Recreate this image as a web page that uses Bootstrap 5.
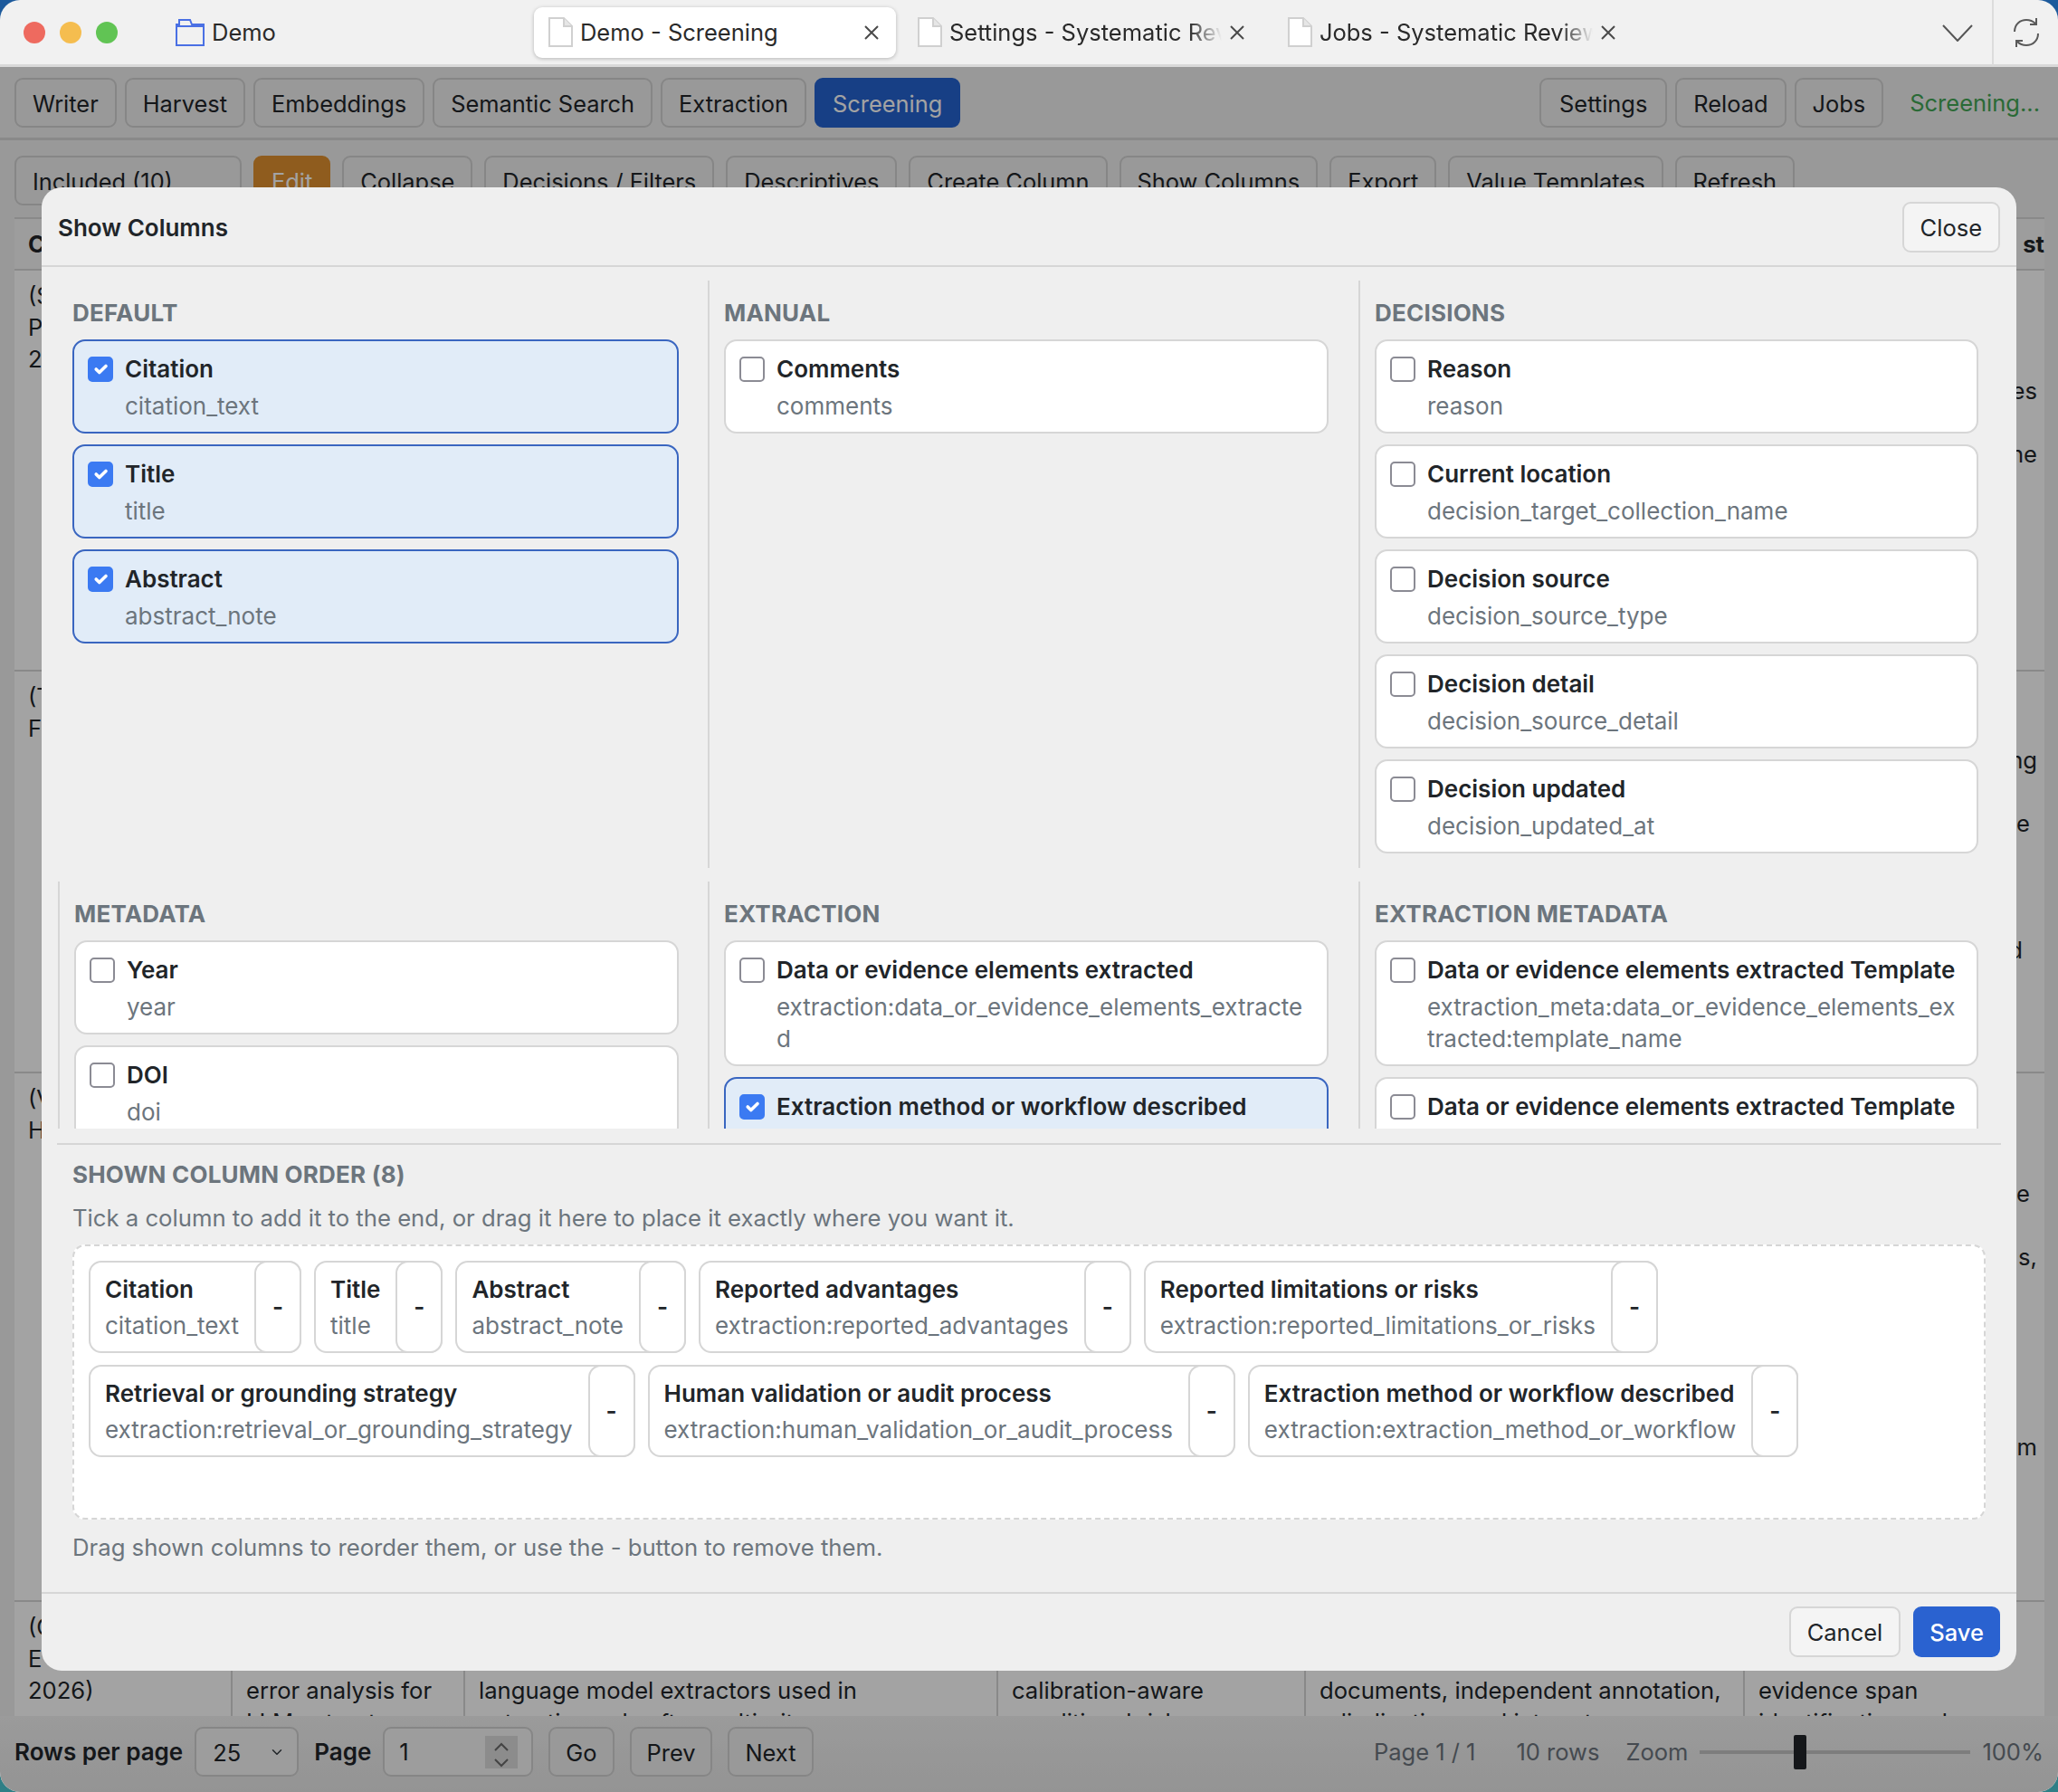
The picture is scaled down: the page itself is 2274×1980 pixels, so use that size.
<!DOCTYPE html>
<html lang="en">
<head>
  <meta charset="UTF-8" />
  <title>Demo - Screening</title>
  <link href="https://cdn.jsdelivr.net/npm/bootstrap@5.3.0/dist/css/bootstrap.min.css" rel="stylesheet"/>
  <style>
    html, body { width: 2274px; height: 1980px; margin: 0; overflow: hidden; }
    body {
      background: linear-gradient(180deg, #1d5a9c 0%, #2f7f86 100%);
      font-family: Inter, "Liberation Sans", sans-serif;
      font-size: 26px;
      color: #212529;
    }
    .app-window { width: 2274px; height: 1980px; border-radius: 22px; overflow: hidden; }

    /* title bar, sits above the dimmed part */
    .title-strip { height: 74px; background: #f1f1f1; border-bottom: 3px solid #d9d9d9; color: #2a2a2a; padding-left: 26px; font-size: 25.5px; }
    .light { width: 24px; height: 24px; border-radius: 50%; margin-right: 16px; }
    .light-r { background: #ee6a5f; }
    .light-y { background: #f5bd4f; }
    .light-g { background: #61c454; }
    .folder-icon { margin-left: 48px; }
    .workspace-name { margin-left: 8px; margin-right: 285px; padding-top: 2px; }
    .win-tab { height: 56px; padding: 0 18px 0 16px; white-space: nowrap; }
    .win-tab.on { background: #fff; border-radius: 9px; box-shadow: 0 1px 4px rgba(0,0,0,.25); width: 400px; }
    .tab-label { overflow: hidden; white-space: nowrap; padding-top: 2px; }
    .tab-fade { -webkit-mask-image: linear-gradient(90deg, #000 88%, transparent 100%); mask-image: linear-gradient(90deg, #000 88%, transparent 100%); }
    .title-tools { margin-left: auto; }
    .chevron-icon { margin-right: 21px; margin-top: 2px; }
    .reload-cell { border-left: 2px solid #dcdcdc; height: 72px; width: 73px; }

    /* app below the title bar */
    .app-body { position: relative; height: 1906px; background: #f0f0f0; }
    .app-btn { height: 55px; padding: 2px 18px 0; font-size: 25.4px; border: 2px solid #d2d2d2; border-radius: 9px; background: #f0f0f0; color: #212529; line-height: 1; white-space: nowrap; }
    .app-btn.on { background: #2563d0; border-color: #2563d0; color: #fff; }
    .app-btn.warn { background: #e0902f; border-color: #e0902f; color: #fff; }
    .app-btn.wide { padding-left: 20px; padding-right: 20px; }
    .top-row { height: 81px; padding: 12px 16px 0; border-bottom: 3px solid #d6d6d6; gap: 9px; }
    .tool-row { height: 85px; padding: 17px 16px 0; gap: 13px; }
    .busy-text { color: #43a655; margin-left: 20px; margin-right: 4px; line-height: 55px; font-size: 25.5px; }
    .status-select { width: 251px; height: 55px; font-size: 25.3px; border: 2px solid #d2d2d2; border-radius: 9px; background-color: #f0f0f0; background-image: none; padding: 8px 18px; }

    .table-clip { height: 1656px; margin: 0 15px 0 16px; overflow: hidden; background: #fff; }
    .sheet { table-layout: fixed; width: 2243px; border-collapse: collapse; font-size: 25.6px; line-height: 35px; }
    .sheet th, .sheet td { padding: 10px 15px; border: 2px solid #d6d6d6; border-left-width: 0; border-right-width: 0; vertical-align: top; white-space: nowrap; overflow: hidden; }
    .sheet td + td, .sheet th + th { border-left: 2px solid #d6d6d6; }
    .sheet th { font-weight: 700; height: 55px; background: #f6f6f6; }
    .sheet .tail { text-align: right; padding-right: 8px; }
    .sheet th.tail { padding-right: 0; }
    .sheet .tail-open { text-align: left; }
    .row-a { height: 443px; }
    .row-b { height: 444px; }
    .row-c { height: 584px; }

    .foot-row { height: 84px; padding: 12px 16px 0; background: linear-gradient(180deg, #f2f2f2, #e8e8e8); gap: 13px; font-size: 25.5px; }
    .foot-label { line-height: 55px; font-weight: 600; font-size: 26px; }
    .rows-select { width: 115px; height: 55px; font-size: 25.5px; border: 2px solid #d2d2d2; border-radius: 9px; background-color: #f6f6f6; padding: 8px 18px; background-position: right 14px center; background-size: 16px 12px; margin-right: 4px; }
    .page-box { position: relative; width: 166px; margin-right: 4px; }
    .page-box input { height: 55px; font-size: 25.5px; border: 2px solid #d2d2d2; border-radius: 9px; background: #f6f6f6; padding: 8px 16px; }
    .spin-box { position: absolute; right: 17px; top: 10px; width: 36px; height: 36px; background: #dbdbdb; }
    .foot-btn { margin-right: 4px; padding-left: 17px; padding-right: 17px; }
    .foot-info { color: #6c757d; line-height: 55px; }
    .zoom-range { width: 299px; height: 38px; margin: 9px 0 0; -webkit-appearance: none; appearance: none; background: transparent; }
    .zoom-range::-webkit-slider-runnable-track { height: 4px; background: #c4c4c4; }
    .zoom-range::-webkit-slider-thumb { -webkit-appearance: none; width: 14px; height: 38px; margin-top: -17px; background: #212529; border: 0; border-radius: 2px; }
    .page-info { margin-left: auto; margin-right: 32px; }
    .rows-info { margin-right: 16px; }

    /* dim layer + dialog */
    .dim-layer { position: absolute; inset: 0; background: rgba(0,0,0,.36); }
    .cols-dialog { position: absolute; left: 46px; top: 133px; width: 2182px; height: 1639px; background: #efefef; border: 0; border-radius: 22px; overflow: hidden; color: #212529; }
    .cols-head { height: 88px; padding: 17px 18px 15px; background: transparent; border: 0; border-bottom: 2px solid #d6d6d6; flex: none; }
    .cols-title { font-size: 26px; font-weight: 600; }
    .plain-btn { height: 56px; padding: 2px 18px 0; font-size: 25.5px; border: 2px solid #d6d6d6; border-radius: 9px; background: #f4f4f4; color: #212529; line-height: 1; }
    .save-btn { height: 56px; padding: 2px 18px 0; font-size: 25.5px; border: 0; border-radius: 9px; background: #2a62d0; color: #fff; font-weight: 500; line-height: 1; }
    .picker-area { height: 952px; overflow: hidden; padding: 15px 18px 0; flex: none; }
    .picker-grid { display: grid; grid-template-columns: 718px 719px 1fr; row-gap: 15px; }
    .picker-sec { padding: 18px 33px 16px 16px; border-left: 2px solid #d6d6d6; }
    .picker-sec.first { border-left: 0; padding-right: 32px; }
    .picker-sec.meta { padding-right: 32px; }
    .picker-sec.last { padding-right: 24px; }
    .sec-label { font-size: 26px; letter-spacing: .2px; font-weight: 700; line-height: 35px; color: #6c757d; text-transform: uppercase; margin-bottom: 12px; }
    .col-pick { display: flex; gap: 13px; background: #fff; border: 2px solid #d6d6d6; border-radius: 14px; padding: 13px 16px 11px 15px; margin-bottom: 12px; }
    .col-pick:last-child { margin-bottom: 0; }
    .col-pick.sel { background: #e1ecf8; border-color: #3a66c0; }
    .col-pick .form-check-input { width: 28px; height: 28px; flex: none; margin: 4px 0 0; border: 2px solid #8b8b94; border-radius: 5px; }
    .col-pick .form-check-input:checked { background-color: #3b7af2; border-color: #3b7af2; }
    .pick-name { font-weight: 600; line-height: 35px; margin-bottom: 6px; }
    .pick-key { color: #6c757d; line-height: 35px; overflow-wrap: anywhere; }
    .order-area { margin: 16px 17px 0; padding: 15px 0 0 17px; border-top: 2px solid #d6d6d6; flex: none; height: 496px; }
    .order-label { margin-bottom: 13px; }
    .order-note { color: #6c757d; line-height: 35px; font-size: 25.7px; }
    .order-zone { width: 2114px; height: 304px; margin: 12px 0 13px; padding: 16px 16px; background: #fff; border: 2px dashed #d6d6d6; border-radius: 14px; gap: 13px 14px; align-content: flex-start; }
    .col-chip { height: 102px; border: 2px solid #d6d6d6; border-radius: 14px; background: #fff; }
    .chip-text { padding: 12px 17px 12px 16px; white-space: nowrap; }
    .chip-text div:first-child { font-weight: 600; line-height: 35px; margin-bottom: 5px; }
    .chip-text div:last-child { color: #6c757d; line-height: 35px; }
    .chip-x { width: 52px; margin: -2px -2px -2px 0; padding: 0; border: 2px solid #d6d6d6; border-radius: 14px; background: #fff; font-size: 26px; font-weight: 600; color: #212529; line-height: 1; }
    .cols-foot { height: 87px; padding: 14px 18px 13px; background: transparent; border: 0; border-top: 2px solid #d6d6d6; gap: 14px; flex: none; }
  </style>
</head>
<body>
<div class="app-window">

  <div class="title-strip d-flex align-items-center" id="titleStrip">
    <span class="light light-r"></span><span class="light light-y"></span><span class="light light-g"></span>
    <svg class="folder-icon" width="32" height="30" viewBox="0 0 32 30" fill="none" stroke="#4a70e4" stroke-width="2"><path d="M1 29V6h3V1h12l2 5h13v23z"/><path d="M1 8h30"/></svg>
    <span class="workspace-name">Demo</span>
  </div>

  <div class="app-body">
    <div class="top-row d-flex align-items-start">
      <button class="app-btn">Writer</button>
      <button class="app-btn">Harvest</button>
      <button class="app-btn">Embeddings</button>
      <button class="app-btn">Semantic Search</button>
      <button class="app-btn">Extraction</button>
      <button class="app-btn on">Screening</button>
      <button class="app-btn wide ms-auto">Settings</button>
      <button class="app-btn">Reload</button>
      <button class="app-btn">Jobs</button>
      <span class="busy-text">Screening...</span>
    </div>
    <div class="tool-row d-flex align-items-start">
      <select class="form-select status-select"><option>Included (10)</option></select>
      <button class="app-btn warn">Edit</button>
      <button class="app-btn">Collapse</button>
      <button class="app-btn">Decisions / Filters</button>
      <button class="app-btn">Descriptives</button>
      <button class="app-btn">Create Column</button>
      <button class="app-btn">Show Columns</button>
      <button class="app-btn">Export</button>
      <button class="app-btn">Value Templates</button>
      <button class="app-btn">Refresh</button>
    </div>

    <div class="table-clip">
      <table class="sheet">
        <colgroup><col width="240"><col width="257"><col width="589"><col width="340"><col width="485"><col width="332"></colgroup>
        <tr><th>C</th><th></th><th></th><th></th><th></th><th class="tail">st</th></tr>
        <tr class="row-a"><td>(S<br>P<br>2</td><td></td><td></td><td></td><td></td><td class="tail"><br><br><br>es<br><br>ne</td></tr>
        <tr class="row-b"><td>(T<br>F</td><td></td><td></td><td></td><td></td><td class="tail"><br><br>ng<br><br><span class="pe-2">e</span><br><br><br><br><span class="pe-3">d</span></td></tr>
        <tr class="row-c"><td>(V<br>H</td><td></td><td></td><td></td><td></td><td class="tail"><br><br><br><span class="pe-2">e</span><br><br>s,<br><br><br><br><br><br>m</td></tr>
        <tr>
          <td>(C<br>E<br>2026)</td>
          <td><br><br>error analysis for<br>LLM extractors</td>
          <td><br><br>language model extractors used in<br>extraction only after multi-site</td>
          <td><br><br>calibration-aware<br>conditional risk</td>
          <td><br><br>documents, independent annotation,<br>adjudication, and interrater</td>
          <td class="tail-open"><br><br>evidence span<br>identification and</td>
        </tr>
      </table>
    </div>

    <div class="foot-row d-flex align-items-start">
      <span class="foot-label">Rows per page</span>
      <select class="form-select rows-select"><option>25</option></select>
      <span class="foot-label">Page</span>
      <div class="page-box">
        <input class="form-control" value="1">
        <div class="spin-box"><svg width="36" height="36" viewBox="0 0 36 36" fill="none" stroke="#6b6b6b" stroke-width="2"><path d="M11 13l7-7 7 7M11 23l7 7 7-7"/></svg></div>
      </div>
      <button class="app-btn foot-btn">Go</button>
      <button class="app-btn foot-btn">Prev</button>
      <button class="app-btn foot-btn">Next</button>
      <span class="foot-info page-info">Page 1 / 1</span>
      <span class="foot-info rows-info">10 rows</span>
      <span class="foot-info">Zoom</span>
      <input class="zoom-range" type="range" min="0" max="100" step="0.5" value="36.5">
      <span class="foot-info">100%</span>
    </div>

    <div class="dim-layer"></div>

    <div class="card cols-dialog">
      <div class="cols-head d-flex align-items-center justify-content-between">
        <span class="cols-title">Show Columns</span>
        <button class="plain-btn">Close</button>
      </div>
      <div class="picker-area">
        <div class="picker-grid" id="pickerGrid"></div>
      </div>
      <div class="order-area">
        <div class="sec-label order-label">Shown column order (8)</div>
        <div class="order-note">Tick a column to add it to the end, or drag it here to place it exactly where you want it.</div>
        <div class="order-zone d-flex flex-wrap" id="orderZone"></div>
        <div class="order-note">Drag shown columns to reorder them, or use the - button to remove them.</div>
      </div>
      <div class="cols-foot d-flex justify-content-end">
        <button class="plain-btn">Cancel</button>
        <button class="save-btn">Save</button>
      </div>
    </div>
  </div>
</div>

<script>
  const sections = [
    { title: 'Default', cols: [['Citation', 'citation_text', 1], ['Title', 'title', 1], ['Abstract', 'abstract_note', 1]] },
    { title: 'Manual', cols: [['Comments', 'comments']] },
    { title: 'Decisions', cols: [['Reason', 'reason'], ['Current location', 'decision_target_collection_name'], ['Decision source', 'decision_source_type'], ['Decision detail', 'decision_source_detail'], ['Decision updated', 'decision_updated_at']] },
    { title: 'Metadata', cols: [['Year', 'year'], ['DOI', 'doi']] },
    { title: 'Extraction', cols: [['Data or evidence elements extracted', 'extraction:data_or_evidence_elements_extracted'], ['Extraction method or workflow described', 'extraction:extraction_method_or_workflow', 1]] },
    { title: 'Extraction metadata', cols: [['Data or evidence elements extracted Template', 'extraction_meta:data_or_evidence_elements_extracted:template_name'], ['Data or evidence elements extracted Template', 'extraction_meta:data_or_evidence_elements_extracted:template_version']] }
  ];

  const shown = [
    ['Citation', 'citation_text'],
    ['Title', 'title'],
    ['Abstract', 'abstract_note'],
    ['Reported advantages', 'extraction:reported_advantages'],
    ['Reported limitations or risks', 'extraction:reported_limitations_or_risks'],
    ['Retrieval or grounding strategy', 'extraction:retrieval_or_grounding_strategy'],
    ['Human validation or audit process', 'extraction:human_validation_or_audit_process'],
    ['Extraction method or workflow described', 'extraction:extraction_method_or_workflow']
  ];

  document.getElementById('pickerGrid').innerHTML = sections.map((sec, i) => `
    <div class="picker-sec ${i === 0 ? 'first' : ''} ${i === 3 ? 'meta' : ''} ${i % 3 === 2 ? 'last' : ''}">
      <div class="sec-label">${sec.title}</div>
      ${sec.cols.map(c => `
        <label class="col-pick ${c[2] ? 'sel' : ''}">
          <input class="form-check-input" type="checkbox" ${c[2] ? 'checked' : ''}>
          <span class="d-block"><span class="pick-name d-block">${c[0]}</span><span class="pick-key d-block">${c[1]}</span></span>
        </label>`).join('')}
    </div>`).join('');

  document.getElementById('orderZone').innerHTML = shown.map(c => `
    <div class="col-chip d-flex">
      <div class="chip-text"><div>${c[0]}</div><div>${c[1]}</div></div>
      <button class="chip-x">-</button>
    </div>`).join('');

  // window tabs, built here so the three stay the same shape
  const docIcon = '<svg class="flex-shrink-0" width="27" height="33" viewBox="0 0 27 33" fill="#fff" stroke="#d0d0d0" stroke-width="2"><path d="M1 1h16l9 9v22H1z"/><path d="M17 1v9h9" fill="#e6e6e6"/></svg>';
  const closeIcon = '<svg width="18" height="18" viewBox="0 0 18 18" stroke="#4a4a4a" stroke-width="2"><path d="M2 2l14 14M16 2L2 16"/></svg>';
  const tabs = [
    { name: 'Demo - Screening', on: true },
    { name: 'Settings - Systematic Review', width: 301, offset: 8 },
    { name: 'Jobs - Systematic Review', width: 302, offset: 13 }
  ];
  const strip = document.getElementById('titleStrip');
  tabs.forEach(t => {
    const el = document.createElement('div');
    el.className = 'win-tab d-flex align-items-center' + (t.on ? ' on' : '');
    const label = t.on
      ? `<span class="tab-label ms-2 me-auto">${t.name}</span>`
      : `<span class="tab-label tab-fade ms-2" style="width:${t.width}px">${t.name}</span>`;
    el.innerHTML = docIcon + label + `<span class="ms-2 d-flex">${closeIcon}</span>`;
    if (t.offset) el.style.marginLeft = t.offset + 'px';
    strip.appendChild(el);
  });
  const tools = document.createElement('div');
  tools.className = 'title-tools d-flex align-items-center';
  tools.innerHTML = `
    <svg class="chevron-icon" width="34" height="19" viewBox="0 0 34 19" fill="none" stroke="#555" stroke-width="2"><path d="M1 1l16 17L33 1"/></svg>
    <div class="reload-cell d-flex align-items-center justify-content-center">
      <svg width="32" height="34" viewBox="0 0 32 34" fill="none" stroke="#5a5a5a" stroke-width="2"><path d="M3 16C3 8 9 3 16 3c4 0 7 1 10 4"/><path d="M27 1v7h-7"/><path d="M29 18c0 8-6 13-13 13-4 0-7-1-10-4"/><path d="M5 33v-7h7"/></svg>
    </div>`;
  strip.appendChild(tools);
</script>
<script src="https://cdn.jsdelivr.net/npm/bootstrap@5.3.0/dist/js/bootstrap.bundle.min.js"></script>
</body>
</html>
